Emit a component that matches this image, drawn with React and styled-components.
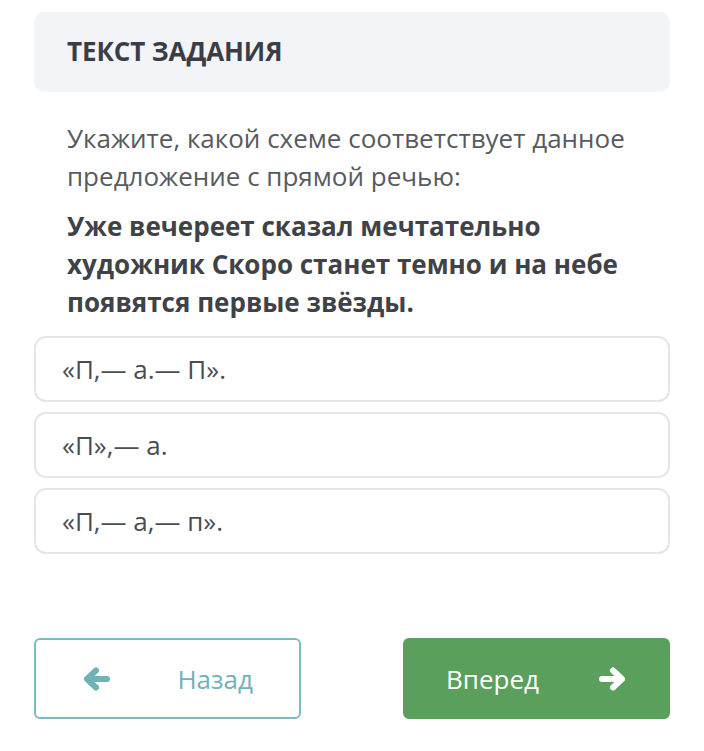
import React from "react";
import styled, { createGlobalStyle } from "styled-components";

const GlobalStyle = createGlobalStyle`
  body {
    margin: 0;
    background: #ffffff;
    font-family: "Open Sans", "Noto Sans", sans-serif;
  }
`;

const Page = styled.div`
  width: 636px;
  padding: 12px 34px 0 34px;
  display: flex;
  flex-direction: column;
`;

const Header = styled.div`
  height: 80px;
  background: #f3f4f7;
  border-radius: 10px;
  display: flex;
  align-items: center;
  padding: 0 33px;
`;

const Title = styled.h2`
  margin: 0 0 2px 0;
  font-size: 26px;
  font-weight: 700;
  color: #3a3d45;
  letter-spacing: -0.1px;
`;

const Body = styled.div`
  padding: 27px 33px 0 33px;
`;

const Prompt = styled.p`
  margin: 0;
  font-size: 26px;
  line-height: 38px;
  color: #575a60;
`;

const Sentence = styled.p`
  margin: 12px 0 0 0;
  font-size: 26px;
  line-height: 38px;
  font-weight: 700;
  color: #3f4247;
`;

const Options = styled.div`
  display: flex;
  flex-direction: column;
  gap: 10px;
  margin-top: 15px;
`;

const Option = styled.div`
  height: 62px;
  border: 2px solid #e4e5e7;
  border-radius: 12px;
  display: flex;
  align-items: center;
  padding: 0 26px;
  font-size: 26px;
  color: #4a4d52;
`;

const Nav = styled.div`
  display: flex;
  justify-content: space-between;
  margin-top: 84px;
`;

const NavButton = styled.button`
  width: 267px;
  height: 81px;
  box-sizing: border-box;
  border-radius: 6px;
  display: flex;
  align-items: center;
  font-family: inherit;
  font-size: 26px;
  cursor: pointer;
  border: 2px solid ${(p) => (p.$primary ? "#5a9f5c" : "#7cbcc0")};
  background: ${(p) => (p.$primary ? "#5a9f5c" : "#ffffff")};
  color: ${(p) => (p.$primary ? "#ffffff" : "#6fb3b7")};
  padding: ${(p) => (p.$primary ? "0 42px 0 41px" : "0 46px 0 47px")};
  justify-content: space-between;

  svg {
    width: 28px;
    height: 24px;
  }
`;

function Arrow({ dir }) {
  const d =
    dir === "left"
      ? "M13 3.5 L4 12 L13 20.5 M4 12 H24"
      : "M15 3.5 L24 12 L15 20.5 M24 12 H4";
  return (
    <svg viewBox="0 0 28 24" fill="none">
      <path
        d={d}
        stroke="currentColor"
        strokeWidth="6"
        strokeLinecap="round"
        strokeLinejoin="round"
      />
    </svg>
  );
}

export default function App() {
  return (
    <>
      <GlobalStyle />
      <Page>
        <Header>
          <Title>ТЕКСТ ЗАДАНИЯ</Title>
        </Header>
        <Body>
          <Prompt>
            Укажите, какой схеме соответствует данное предложение с прямой речью:
          </Prompt>
          <Sentence>
            Уже вечереет сказал мечтательно художник Скоро станет темно и на небе
            появятся первые звёзды.
          </Sentence>
        </Body>
        <Options>
          <Option>«П,— а.— П».</Option>
          <Option>«П»,— а.</Option>
          <Option>«П,— а,— п».</Option>
        </Options>
        <Nav>
          <NavButton>
            <Arrow dir="left" />
            <span>Назад</span>
          </NavButton>
          <NavButton $primary>
            <span>Вперед</span>
            <Arrow dir="right" />
          </NavButton>
        </Nav>
      </Page>
    </>
  );
}
